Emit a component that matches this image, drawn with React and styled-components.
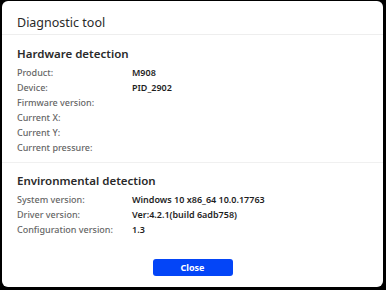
import React from 'react';
import styled, { createGlobalStyle } from 'styled-components';

const GlobalStyle = createGlobalStyle`
  html, body {
    margin: 0;
    padding: 0;
    background: #000;
  }
  body {
    font-family: "Noto Sans", "Open Sans", sans-serif;
  }
`;

const Dialog = styled.div`
  margin: 1px 3px 3px 2px;
  height: 286px;
  background: #fff;
  border-radius: 6px;
  display: flex;
  flex-direction: column;
  overflow: hidden;
`;

const Header = styled.div`
  padding: 14px 15px 3px;
  font-size: 12.5px;
  line-height: 16px;
  color: #2a2a2a;
  border-bottom: 1px solid #eeeeee;
`;

const Section = styled.div`
  padding: 0 15px ${(p) => p.$bottom || 0}px;
  border-bottom: ${(p) => (p.$divider ? '1px solid #f0f0f0' : 'none')};
`;

const SectionTitle = styled.div`
  margin-top: ${(p) => p.$top}px;
  margin-bottom: 3px;
  font-size: 11.5px;
  line-height: 16px;
  font-weight: 600;
  color: #2a2a2a;
`;

const Row = styled.div`
  display: grid;
  grid-template-columns: 115px 1fr;
  font-size: 9px;
  line-height: 15px;
`;

const Label = styled.span`
  color: #666;
  font-weight: 500;
`;

const Value = styled.span`
  color: #1e1e1e;
  font-weight: 600;
`;

const Footer = styled.div`
  display: flex;
  justify-content: center;
  padding-top: 22px;
`;

const CloseButton = styled.button`
  width: 80px;
  height: 17px;
  padding: 0;
  border: none;
  border-radius: 3px;
  background: #0445f7;
  color: #fff;
  font-family: inherit;
  font-size: 9px;
  font-weight: 700;
  cursor: pointer;
`;

const hardware = [
  ['Product:', 'M908'],
  ['Device:', 'PID_2902'],
  ['Firmware version:', ''],
  ['Current X:', ''],
  ['Current Y:', ''],
  ['Current pressure:', ''],
];

const environment = [
  ['System version:', 'Windows 10 x86_64 10.0.17763'],
  ['Driver version:', 'Ver:4.2.1(build 6adb758)'],
  ['Configuration version:', '1.3'],
];

const App = () => {
  return (
    <>
      <GlobalStyle />
      <Dialog>
        <Header>Diagnostic tool</Header>
        <Section $divider $bottom={7}>
          <SectionTitle $top={11}>Hardware detection</SectionTitle>
          {hardware.map(([label, value]) => (
            <Row key={label}>
              <Label>{label}</Label>
              <Value>{value}</Value>
            </Row>
          ))}
        </Section>
        <Section>
          <SectionTitle $top={10}>Environmental detection</SectionTitle>
          {environment.map(([label, value]) => (
            <Row key={label}>
              <Label>{label}</Label>
              <Value>{value}</Value>
            </Row>
          ))}
        </Section>
        <Footer>
          <CloseButton>Close</CloseButton>
        </Footer>
      </Dialog>
    </>
  );
};

export default App;
